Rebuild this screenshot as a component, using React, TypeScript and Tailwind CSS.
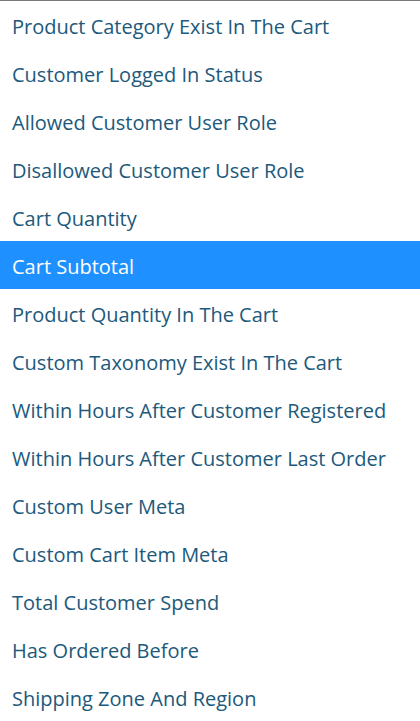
const items = [
  "Product Category Exist In The Cart",
  "Customer Logged In Status",
  "Allowed Customer User Role",
  "Disallowed Customer User Role",
  "Cart Quantity",
  "Cart Subtotal",
  "Product Quantity In The Cart",
  "Custom Taxonomy Exist In The Cart",
  "Within Hours After Customer Registered",
  "Within Hours After Customer Last Order",
  "Custom User Meta",
  "Custom Cart Item Meta",
  "Total Customer Spend",
  "Has Ordered Before",
  "Shipping Zone And Region",
];

export default function App() {
  const selected = "Cart Subtotal";
  return (
    <div
      className="w-[420px] h-[721px] overflow-hidden bg-white border-t border-[#7a7a7a]"
      style={{ fontFamily: '"Open Sans", "Noto Sans", sans-serif' }}
    >
      <ul>
        {items.map((item) => (
          <li
            key={item}
            className={
              item === selected
                ? "h-12 flex items-center px-3 pt-[3px] bg-[#1e90ff] text-white text-[20px]"
                : "h-12 flex items-center px-3 pt-[3px] text-[#20597b] text-[20px]"
            }
          >
            {item}
          </li>
        ))}
      </ul>
    </div>
  );
}
